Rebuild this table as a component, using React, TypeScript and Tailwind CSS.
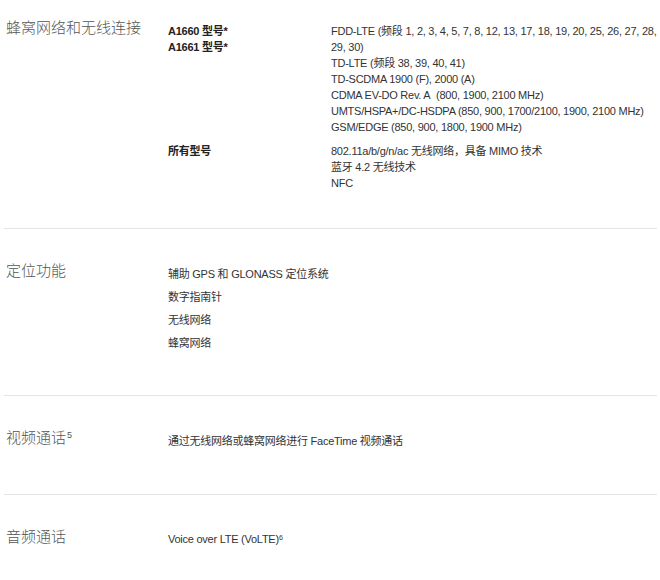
import React from "react";

const font = { fontFamily: '"Liberation Sans", Arial, "Noto Sans CJK SC", sans-serif' };

function Section({
  title,
  sup,
  children,
  first,
  pb,
}: {
  title: string;
  sup?: string;
  children: React.ReactNode;
  first?: boolean;
  pb?: string;
}) {
  return (
    <div
      className={
        first
          ? "flex pt-[18px] pb-[37px]"
          : "flex border-t border-[#e5e5e5] pt-[32px] " + (pb ?? "pb-[41px]")
      }
    >
      <div className="w-[164px] shrink-0 pl-[2px] text-[15px] leading-[20px] font-light text-[#555]">
        {title}
        {sup && <span className="relative -top-[5px] ml-[1px] text-[9px] leading-none">{sup}</span>}
      </div>
      <div className="flex-1 min-w-0">{children}</div>
    </div>
  );
}

export default function App() {
  return (
    <div className="w-[660px] h-[580px] bg-white pl-[4px] pr-[3px] text-[#333]" style={font}>
      <Section title="蜂窝网络和无线连接" first>
        <div className="mt-[5px] text-[11px] leading-[16px] tracking-[-0.25px]">
          <div className="flex">
            <div className="w-[163px] shrink-0 font-bold text-[#222]">
              <div>A1660 型号*</div>
              <div>A1661 型号*</div>
            </div>
            <div className="flex-1 min-w-0">
              <div>
                FDD-LTE (频段 1, 2, 3, 4, 5, 7, 8, 12, 13, 17, 18, 19, 20, 25, 26, 27, 28,
                <br />
                29, 30)
              </div>
              <div>TD-LTE (频段 38, 39, 40, 41)</div>
              <div>TD-SCDMA 1900 (F), 2000 (A)</div>
              <div>CDMA EV-DO Rev. A&nbsp; (800, 1900, 2100 MHz)</div>
              <div className="whitespace-nowrap">UMTS/HSPA+/DC-HSDPA (850, 900, 1700/2100, 1900, 2100 MHz)</div>
              <div>GSM/EDGE (850, 900, 1800, 1900 MHz)</div>
            </div>
          </div>
          <div className="flex mt-[8px]">
            <div className="w-[163px] shrink-0 font-bold text-[#222]">所有型号</div>
            <div className="flex-1 min-w-0">
              <div>802.11a/b/g/n/ac 无线网络，具备 MIMO 技术</div>
              <div>蓝牙 4.2 无线技术</div>
              <div>NFC</div>
            </div>
          </div>
        </div>
      </Section>
      <Section title="定位功能" pb="pb-[40px]">
        <div className="pt-[2px] text-[11px] leading-[23px] tracking-[-0.25px]">
          <div>辅助 GPS 和 GLONASS 定位系统</div>
          <div>数字指南针</div>
          <div>无线网络</div>
          <div>蜂窝网络</div>
        </div>
      </Section>
      <Section title="视频通话" sup="5">
        <div className="pt-[2px] text-[11px] leading-[23px] tracking-[-0.25px]">
          <div>通过无线网络或蜂窝网络进行 FaceTime 视频通话</div>
        </div>
      </Section>
      <Section title="音频通话">
        <div className="pt-[1px] text-[11px] leading-[23px] tracking-[-0.25px]">
          <div>
            Voice over LTE (VoLTE)
            <span className="relative -top-[3px] text-[7px] leading-none">6</span>
          </div>
        </div>
      </Section>
    </div>
  );
}
